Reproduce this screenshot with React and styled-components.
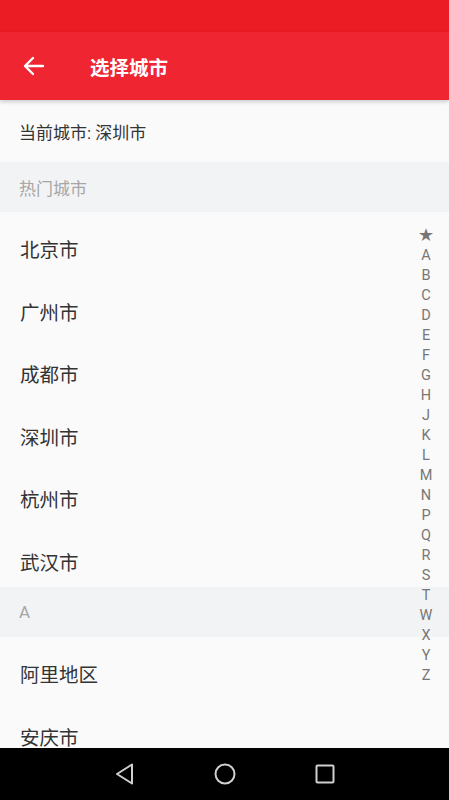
import React from "react";
import styled, { createGlobalStyle } from "styled-components";

const GlobalStyle = createGlobalStyle`
  html, body {
    margin: 0;
    padding: 0;
    background: #fafafa;
  }
  body {
    font-family: Roboto, "Noto Sans CJK SC", "Noto Sans", sans-serif;
  }
`;

const Screen = styled.div`
  position: relative;
  width: 449px;
  height: 800px;
  display: flex;
  flex-direction: column;
  overflow: hidden;
  background: #fafafa;
`;

const StatusBar = styled.div`
  height: 32px;
  flex-shrink: 0;
  background: #ec1c25;
`;

const Toolbar = styled.div`
  height: 68px;
  flex-shrink: 0;
  display: flex;
  align-items: center;
  background: #ef2631;
  box-shadow: 0 2px 4px rgba(0, 0, 0, 0.18);
  position: relative;
  z-index: 1;
`;

const BackButton = styled.div`
  width: 70px;
  padding-left: 23px;
  box-sizing: border-box;
  display: flex;
  align-items: center;
`;

const Title = styled.h1`
  margin: 0;
  color: #fff;
  font-size: 19.5px;
  font-weight: 700;
  padding-left: 20px;
`;

const Content = styled.div`
  flex: 1;
  position: relative;
  overflow: hidden;
`;

const CurrentRow = styled.div`
  height: 62px;
  display: flex;
  align-items: center;
  padding-left: 19px;
  font-size: 17px;
  color: #333;
  background: #fafafa;
`;

const SectionHeader = styled.div`
  height: 50px;
  display: flex;
  align-items: center;
  padding-left: 19px;
  font-size: 17px;
  color: #a6a6a6;
  background: #f2f3f5;
`;

const CityItem = styled.div`
  height: 62.5px;
  box-sizing: border-box;
  padding: 11px 0 0 20px;
  display: flex;
  align-items: center;
  font-size: 19.5px;
  color: #333;
`;

const IndexBar = styled.div`
  position: absolute;
  right: 8px;
  top: 126px;
  width: 30px;
  display: flex;
  flex-direction: column;
  align-items: center;
`;

const IndexLetter = styled.div`
  height: 20px;
  line-height: 20px;
  font-size: 14.5px;
  color: #777;
`;

const NavBar = styled.div`
  height: 52px;
  flex-shrink: 0;
  background: #000;
  display: flex;
  align-items: center;
  justify-content: center;
  gap: 76px;
  svg {
    display: block;
  }
`;

const hotCities = ["北京市", "广州市", "成都市", "深圳市", "杭州市", "武汉市"];
const aCities = ["阿里地区", "安庆市"];
const letters = ["★", "A", "B", "C", "D", "E", "F", "G", "H", "J", "K", "L", "M", "N", "P", "Q", "R", "S", "T", "W", "X", "Y", "Z"];

function App() {
  return (
    <Screen>
      <GlobalStyle />
      <StatusBar />
      <Toolbar>
        <BackButton>
          <svg width="22" height="20" viewBox="0 0 22 20" fill="none" stroke="#fff" strokeWidth="2.4" strokeLinecap="round" strokeLinejoin="round">
            <path d="M20 10H2.5M10 2L2 10l8 8" />
          </svg>
        </BackButton>
        <Title>选择城市</Title>
      </Toolbar>
      <Content>
        <CurrentRow>当前城市: 深圳市</CurrentRow>
        <SectionHeader>热门城市</SectionHeader>
        {hotCities.map((c) => (
          <CityItem key={c}>{c}</CityItem>
        ))}
        <SectionHeader>A</SectionHeader>
        {aCities.map((c) => (
          <CityItem key={c}>{c}</CityItem>
        ))}
        <IndexBar>
          {letters.map((l) => (
            <IndexLetter key={l}>{l}</IndexLetter>
          ))}
        </IndexBar>
      </Content>
      <NavBar>
        <svg width="24" height="24" viewBox="0 0 24 24" fill="none" stroke="#d0d0d0" strokeWidth="2" strokeLinejoin="round">
          <path d="M19 2.5L4 12l15 9.5z" />
        </svg>
        <svg width="24" height="24" viewBox="0 0 24 24" fill="none" stroke="#d0d0d0" strokeWidth="2">
          <circle cx="12" cy="12" r="9.5" />
        </svg>
        <svg width="24" height="24" viewBox="0 0 24 24" fill="none" stroke="#d0d0d0" strokeWidth="2">
          <rect x="3.5" y="3.5" width="17" height="17" rx="1" />
        </svg>
      </NavBar>
    </Screen>
  );
}

export default App;
